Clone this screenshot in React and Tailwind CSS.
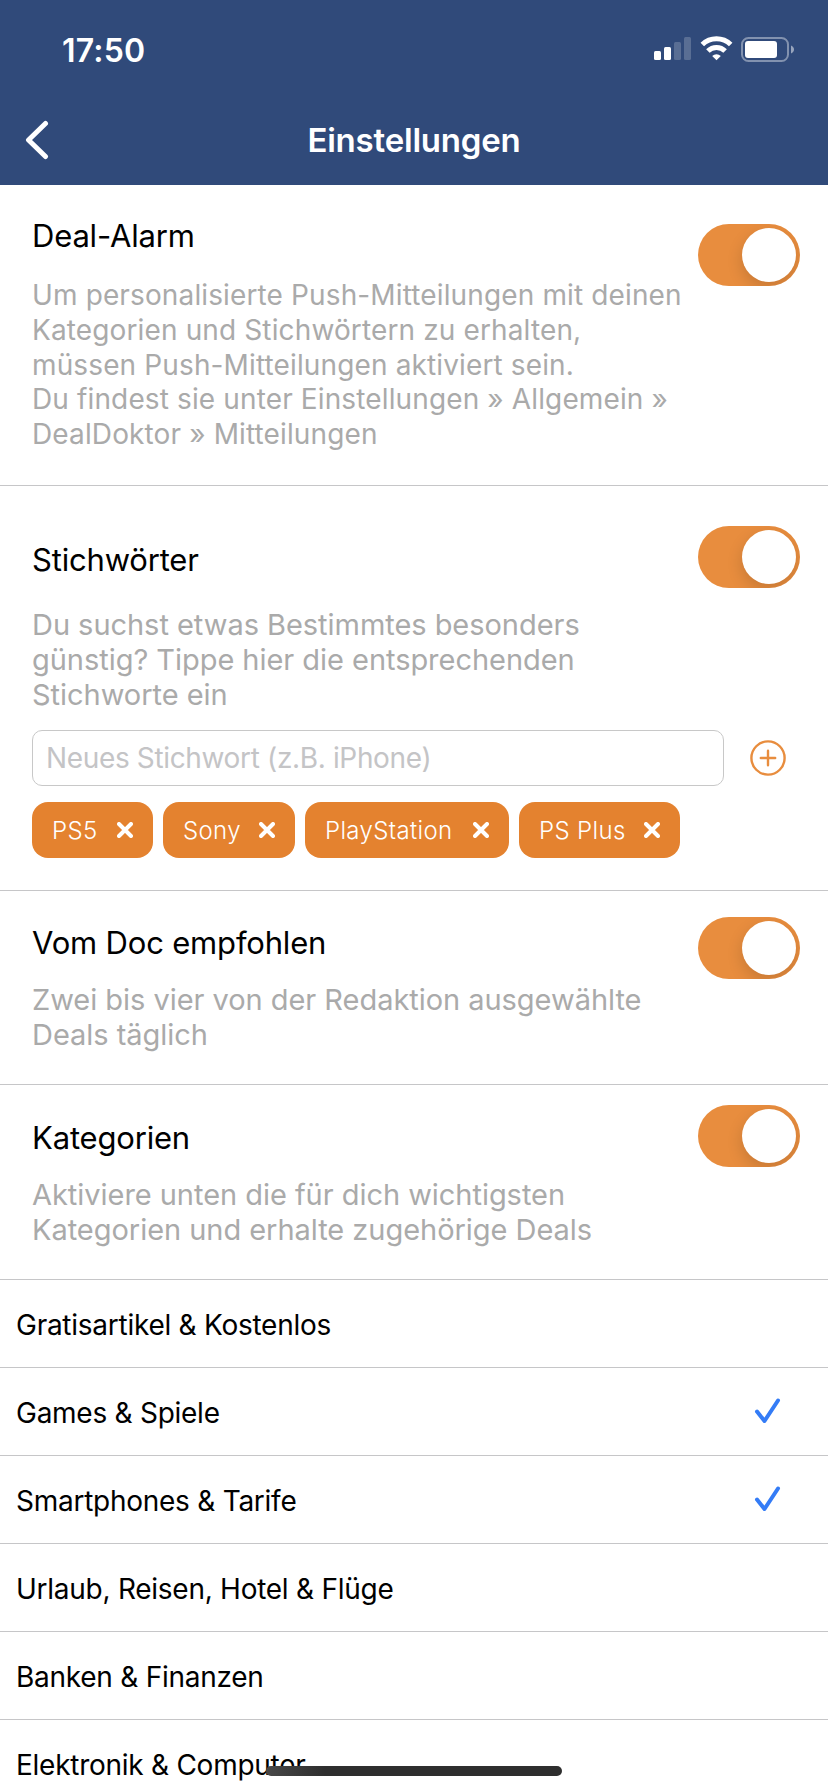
import React, { useState } from 'react';
import clsx from 'clsx';

const CATEGORIES = [
  'Gratisartikel & Kostenlos',
  'Games & Spiele',
  'Smartphones & Tarife',
  'Urlaub, Reisen, Hotel & Flüge',
  'Banken & Finanzen',
  'Elektronik & Computer',
];

const KEYWORDS = [
  { label: 'PS5', width: 'w-[121px]' },
  { label: 'Sony', width: 'w-[132px]' },
  { label: 'PlayStation', width: 'w-[204px]' },
  { label: 'PS Plus', width: 'w-[161px]' },
];

function StatusBar() {
  return (
    <div className="flex h-[98px] items-center justify-between pl-[62px] pr-[33px] text-white">
      <span className="pt-[3px] text-[32px] font-semibold leading-10 tracking-[0.2px]">17:50</span>
      <div className="flex items-center">
        <svg width="37" height="26" viewBox="0 0 37 26" fill="currentColor">
          <rect x="0" y="15" width="7" height="9" rx="1.5" />
          <rect x="10" y="11" width="7" height="13" rx="1.5" />
          <rect x="20" y="6" width="7" height="18" rx="1.5" opacity="0.2" />
          <rect x="30" y="1" width="7" height="23" rx="1.5" opacity="0.2" />
        </svg>
        <svg className="ml-[9px]" width="33" height="26" viewBox="0 0 33 26" fill="none" stroke="currentColor" strokeWidth="5">
          <path d="M2.3 8.5 A20.5 20.5 0 0 1 30.7 8.5" />
          <path d="M7.9 15 A12.2 12.2 0 0 1 25.1 15" />
          <path d="M12.2 20 A6.2 6.2 0 0 1 20.8 20 L16.5 24.3 Z" fill="currentColor" stroke="none" />
        </svg>
        <svg className="ml-2 mt-px" width="54" height="26" viewBox="0 0 54 26">
          <rect x="1" y="1" width="46" height="23" rx="6.5" fill="none" stroke="currentColor" strokeWidth="2" opacity="0.4" />
          <rect x="4" y="4" width="32" height="17" rx="3" fill="currentColor" />
          <path d="M50 8.5 C54 10 54 15 50 16.5 Z" fill="currentColor" opacity="0.5" />
        </svg>
      </div>
    </div>
  );
}

function NavBar() {
  return (
    <div className="grid h-[87px] grid-cols-[100px_1fr_100px] items-center text-white">
      <button className="pl-[25px]" aria-label="Zurück">
        <svg className="mt-[-3px]" width="25" height="40" viewBox="0 0 25 40" fill="none" stroke="currentColor" strokeWidth="5" strokeLinecap="round" strokeLinejoin="round">
          <path d="M20.5 3.5 L3.5 20 L20.5 36.5" />
        </svg>
      </button>
      <h1 className="mt-[-4px] text-center text-[33px] font-semibold leading-10 tracking-[-0.2px]">Einstellungen</h1>
    </div>
  );
}

function Toggle({ className }) {
  const [on, setOn] = useState(true);
  return (
    <button
      role="switch"
      aria-checked={on}
      onClick={() => setOn(!on)}
      className={clsx(
        'flex h-[62px] w-[102px] shrink-0 items-center overflow-hidden rounded-full p-1',
        on ? 'justify-end bg-[#e88d3e]' : 'justify-start bg-[#e9e9ea]',
        className
      )}
    >
      <span className="size-[54px] rounded-full bg-white shadow-[0_6px_16px_rgba(0,0,0,0.15)]" />
    </button>
  );
}

function Section({ title, lines, height, textTop, toggleTop, gap, textStyle, children }) {
  return (
    <section className={clsx('border-b border-[#c6c6c8] pl-8 pr-7', height)}>
      <div className="flex items-start justify-between">
        <div className={textTop}>
          <h2 className="text-[31px] leading-10 tracking-[-0.18px] text-black">{title}</h2>
          <p className={clsx('whitespace-nowrap text-[#aaaaaa]', gap, textStyle || 'text-[29px] leading-[35.2px] tracking-[-0.04px]')}>
            {lines.map(line => (
              <span key={line} className="block">{line}</span>
            ))}
          </p>
        </div>
        <Toggle className={toggleTop} />
      </div>
      {children}
    </section>
  );
}

function KeywordForm() {
  return (
    <>
      <div className="mt-[17.4px] flex items-center">
        <input
          className="h-14 w-[692px] rounded-[10px] border border-[#c8c8c8] px-[13px] text-[28px] tracking-[-0.35px] placeholder:text-[#c4c4c6]"
          placeholder="Neues Stichwort (z.B. iPhone)"
        />
        <button className="ml-[26px]" aria-label="Hinzufügen">
          <svg width="36" height="36" viewBox="0 0 36 36" fill="none" stroke="#e88d3e" strokeWidth="2.4" strokeLinecap="round">
            <circle cx="18" cy="18" r="16.6" />
            <path d="M18 10.8 V25.2 M10.8 18 H25.2" />
          </svg>
        </button>
      </div>
      <div className="mt-4 flex gap-2.5">
        {KEYWORDS.map(k => (
          <div key={k.label} className={clsx('flex h-14 items-center justify-between rounded-2xl bg-[#e4822f] px-5 text-white', k.width)}>
            <span className="pt-0.5 text-[24px] font-light leading-8 tracking-[0.35px]">{k.label}</span>
            <svg width="16" height="16" viewBox="0 0 16 16" stroke="currentColor" strokeWidth="4" strokeLinecap="round">
              <path d="M2 2 L14 14 M14 2 L2 14" />
            </svg>
          </div>
        ))}
      </div>
    </>
  );
}

export default function App() {
  const [selected, setSelected] = useState(['Games & Spiele', 'Smartphones & Tarife']);

  const toggleCategory = (name) => {
    setSelected(prev => (prev.includes(name) ? prev.filter(c => c !== name) : [...prev, name]));
  };

  return (
    <div className="relative h-[1792px] w-[828px] overflow-hidden bg-white font-['Inter',sans-serif] text-black">
      <header className="h-[185px] bg-[#304a7a]">
        <StatusBar />
        <NavBar />
      </header>

      <Section
        title="Deal-Alarm"
        lines={[
          'Um personalisierte Push-Mitteilungen mit deinen',
          'Kategorien und Stichwörtern zu erhalten,',
          'müssen Push-Mitteilungen aktiviert sein.',
          'Du findest sie unter Einstellungen » Allgemein »',
          'DealDoktor » Mitteilungen',
        ]}
        height="h-[301px]"
        textTop="pt-[31px]"
        toggleTop="mt-[39px]"
        gap="mt-[22px]"
        textStyle="text-[28px] leading-[34.75px] tracking-[0.13px]"
      />
      <Section
        title="Stichwörter"
        lines={['Du suchst etwas Bestimmtes besonders', 'günstig? Tippe hier die entsprechenden', 'Stichworte ein']}
        height="h-[405px]"
        textTop="pt-[54px]"
        toggleTop="mt-10"
        gap="mt-[27px]"
      >
        <KeywordForm />
      </Section>
      <Section
        title="Vom Doc empfohlen"
        lines={['Zwei bis vier von der Redaktion ausgewählte', 'Deals täglich']}
        height="h-[194px]"
        textTop="pt-8"
        toggleTop="mt-[26px]"
        gap="mt-[19px]"
      />
      <Section
        title="Kategorien"
        lines={['Aktiviere unten die für dich wichtigsten', 'Kategorien und erhalte zugehörige Deals']}
        height="h-[195px]"
        textTop="pt-[33px]"
        toggleTop="mt-5"
        gap="mt-[19px]"
      />

      <ul>
        {CATEGORIES.map(name => (
          <li
            key={name}
            onClick={() => toggleCategory(name)}
            className="flex h-[88px] items-center justify-between border-b border-[#c6c6c8] pl-4 pr-[46px] text-[28px] tracking-[-0.26px]"
          >
            <span className="pt-0.5">{name}</span>
            {selected.includes(name) && (
              <svg className="mb-0.5" width="28" height="28" viewBox="0 0 28 28" fill="none" stroke="#347cf6" strokeWidth="4" strokeLinecap="round" strokeLinejoin="round">
                <path d="M3 14.5 L10.5 24 L24 3.5" />
              </svg>
            )}
          </li>
        ))}
      </ul>

      {/* home indicator */}
      <div className="absolute bottom-4 left-[266px] h-2.5 w-[296px] rounded-full bg-linear-to-r from-[#484848] via-[#2e2e2e] via-20% to-[#2e2e2e]" />
    </div>
  );
}
